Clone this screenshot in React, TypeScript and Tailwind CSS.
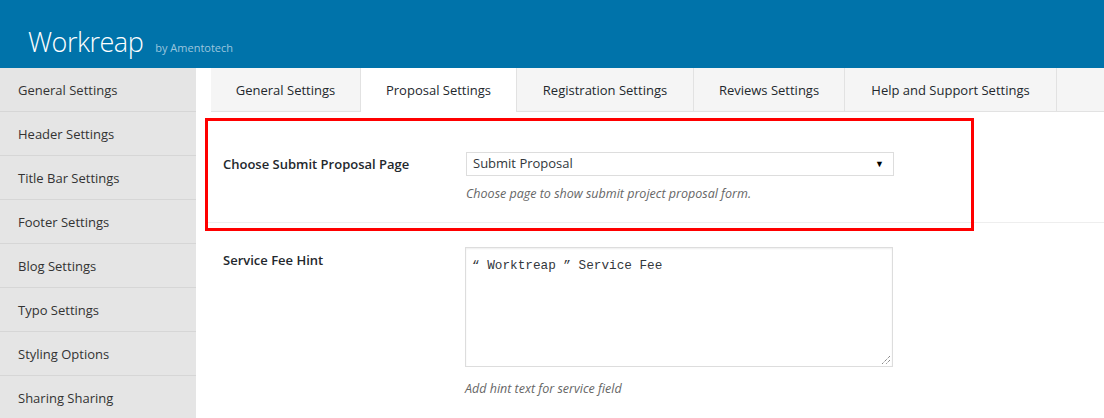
import React from "react";

const sideItems = [
  "General Settings",
  "Header Settings",
  "Title Bar Settings",
  "Footer Settings",
  "Blog Settings",
  "Typo Settings",
  "Styling Options",
  "Sharing Sharing",
];

const tabs = [
  { label: "General Settings", w: "w-[150px]" },
  { label: "Proposal Settings", w: "w-[156px]", active: true },
  { label: "Registration Settings", w: "w-[177px]" },
  { label: "Reviews Settings", w: "w-[151px]" },
  { label: "Help and Support Settings", w: "w-[212px]" },
];

export default function App() {
  return (
    <div
      className="w-[1104px] h-[418px] overflow-hidden bg-white relative"
      style={{ fontFamily: '"Open Sans", "Noto Sans", sans-serif' }}
    >
      <header className="h-[68px] bg-[#0073aa] flex items-end pl-[28px] pb-[13px]">
        <span className="text-[27px] font-light text-white leading-none tracking-[-0.5px]">
          Workreap
        </span>
        <span className="ml-[12px] mb-[2px] text-[11px] text-[#9cc6de] leading-none">
          by Amentotech
        </span>
      </header>
      <div className="flex">
        <aside className="w-[196px] bg-[#e5e5e5] h-[350px] shrink-0">
          {sideItems.map((s) => (
            <div
              key={s}
              className="h-[44px] border-b border-[#d6d6d6] flex items-center pl-[18px] pt-[2px] text-[13px] text-[#333]"
            >
              {s}
            </div>
          ))}
        </aside>
        <main className="flex-1 relative">
          <div className="ml-[15px] flex h-[44px] bg-[#f5f5f5] border-b border-[#e2e2e2]">
            {tabs.map((t) => (
              <div
                key={t.label}
                className={`${t.w} shrink-0 h-[43px] border-r border-[#e2e2e2] flex items-center justify-center pt-[2px] text-[13px] text-[#23282d] ${
                  t.active ? "bg-white h-[44px] -mb-px" : ""
                }`}
              >
                {t.label}
              </div>
            ))}
          </div>
          <div className="ml-[12px] pt-[40px] pb-[20px] border-b border-[#eeeeee] flex">
            <div className="w-[258px] pl-[15px] pt-[2px] h-[24px] flex items-center text-[13px] font-semibold text-[#23282d]">
              Choose Submit Proposal Page
            </div>
            <div>
              <div className="w-[428px] h-[24px] border border-[#dddddd] flex items-center justify-between pl-[6px] pr-[9px] text-[13px] text-[#32373c]">
                <span>Submit Proposal</span>
                <span className="text-[9px] text-black">▼</span>
              </div>
              <div className="mt-[9px] mb-[-1px] text-[12.5px] italic text-[#666] leading-[18px]">
                Choose page to show submit project proposal form.
              </div>
            </div>
          </div>
          <div className="ml-[12px] pt-[24px] flex">
            <div className="w-[257px] pl-[15px] pt-[3px] text-[13px] font-semibold text-[#23282d] leading-[20px]">
              Service Fee Hint
            </div>
            <div>
              <div className="relative w-[428px] h-[120px] border border-[#dddddd] shadow-[inset_0_1px_2px_rgba(0,0,0,0.07)] px-[6px] pt-[3px]">
                <span
                  className="text-[12.7px] text-[#32373c] leading-[18px]"
                  style={{ fontFamily: '"Liberation Mono", monospace' }}
                >
                  “ Worktreap ” Service Fee
                </span>
                <svg
                  className="absolute right-[1px] bottom-[1px]"
                  width="10"
                  height="10"
                  viewBox="0 0 10 10"
                >
                  <path d="M9 1 L1 9 M9 5 L5 9" stroke="#555" strokeWidth="1" strokeDasharray="1 1" />
                </svg>
              </div>
              <div className="mt-[13px] text-[12.5px] italic text-[#666] leading-[18px]">
                Add hint text for service field
              </div>
            </div>
          </div>
        </main>
      </div>
      <div className="absolute left-[205px] top-[118px] w-[769px] h-[113px] border-[3px] border-[#ff0000] pointer-events-none" />
    </div>
  );
}
